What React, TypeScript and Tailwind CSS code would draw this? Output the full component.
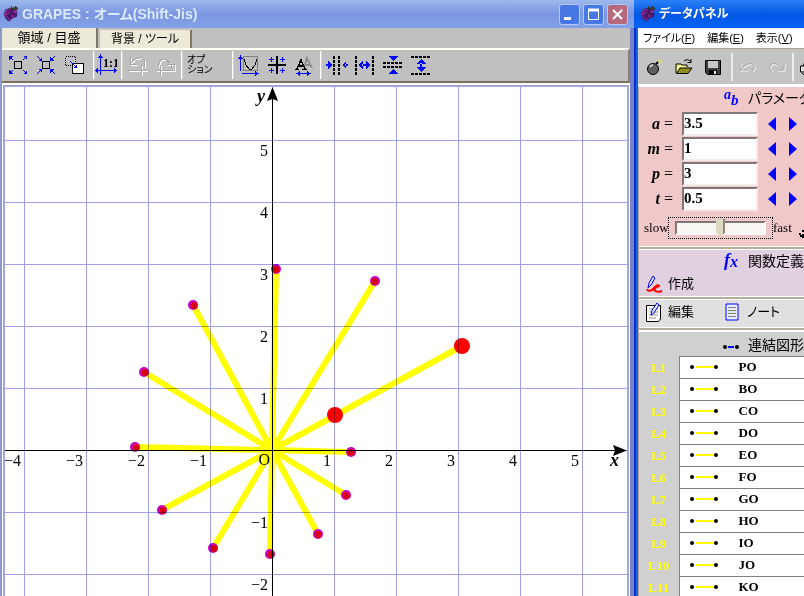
import React from "react";

const JP = "font-['Liberation_Sans','Noto_Sans_CJK_JP',sans-serif] [font-feature-settings:'palt']";
const SERIF = "font-['Liberation_Serif',serif]";

function Grape() {
  const dots = [
    [4, 6], [7, 5], [10, 6], [3, 9], [6, 8], [9, 9], [12, 7], [4, 12], [7, 11], [10, 11], [6, 14], [12, 10],
  ];
  return (
    <svg width="16" height="18" viewBox="0 0 16 18" className="shrink-0" aria-hidden="true">
      <path d="M3 13 8 4 13 8 9 14Z" fill="#301048" />
      {dots.map(([x, y], i) => (
        <circle key={i} cx={x} cy={y} r="2" fill={i % 3 === 0 ? "#a030a0" : i % 3 === 1 ? "#702890" : "#501870"} stroke="#30104c" strokeWidth="0.5" />
      ))}
      <path d="M8 4 9 1M9 4 13 1.5 15 4 11 4.5Z" stroke="#303020" fill="#504030" strokeWidth="1" />
    </svg>
  );
}

function Sep({ tight }: { tight?: boolean }) {
  return <span className={`h-7 w-[2px] shrink-0 border-l border-white bg-[#d4d4d0] ${tight ? "ml-2" : "mx-1"}`} />;
}

function Tool({ label, children }: { label: string; children: React.ReactNode }) {
  return (
    <button type="button" aria-label={label} className="flex h-[22px] w-[22px] shrink-0 items-center justify-center">
      <svg width="22" height="22" viewBox="0 0 22 22" fill="none" shapeRendering="crispEdges">
        {children}
      </svg>
    </button>
  );
}

const undoArrow = "M3 3V10H10M4 9Q8 3 15 4Q20 7 17 13";
const redoArrow = "M19 17V10H12M18 16Q15 6 8 5Q3 7 4 13";

function Engraved({ d }: { d: string }) {
  return (
    <>
      <path d={d} stroke="#fff" transform="translate(1 1)" />
      <path d={d} stroke="#a8a8a8" />
    </>
  );
}

function MainToolbar() {
  return (
    <div className="flex h-[35px] items-center overflow-hidden border-y-2 border-b-[#7b7060] border-t-[#fffff4] border-r-2 border-r-[#8a8070] bg-[#c0c0c0] pb-px pl-[5px]">
      <div className="flex gap-[6px]">
        <Tool label="拡大">
          <rect x="7.5" y="7.5" width="7" height="7" stroke="#000" />
          <path d="M6 6 3 3M16 6 19 3M6 16 3 19M16 16 19 19" stroke="#00f" />
          <path d="M2 2H6L2 6ZM20 2H16L20 6ZM2 20H6L2 16ZM20 20H16L20 16Z" fill="#00f" />
        </Tool>
        <Tool label="縮小">
          <rect x="7.5" y="7.5" width="7" height="7" stroke="#000" />
          <path d="M2 2 5 5M20 2 17 5M2 20 5 17M20 20 17 17" stroke="#00f" />
          <path d="M7 7H3L7 3ZM15 7H19L15 3ZM7 15H3L7 19ZM15 15H19L15 19Z" fill="#00f" />
        </Tool>
        <Tool label="範囲">
          <rect x="2.5" y="2.5" width="10" height="9" stroke="#000" strokeDasharray="1 1" />
          <rect x="9.5" y="9.5" width="11" height="10" fill="#fff" stroke="#000" />
          <path d="M7 7 13 13" stroke="#00f" />
          <path d="M14 14V10L10 14Z" fill="#00f" />
        </Tool>
      </div>
      <Sep tight />
      <Tool label="1対1">
        <path d="M5.5 1V21M1 16.5H21" stroke="#00f" />
        <path d="M3 4 5.5 0 8 4ZM19 14 22 16.5 19 19ZM3 14 0 16.5 3 19Z" fill="#00f" />
        <text x="8" y="13" fontSize="12" fontWeight="bold" fill="#000" className="font-['Liberation_Serif',serif]">1:1</text>
      </Tool>
      <Sep />
      <div className="flex gap-[6px]">
        <Tool label="元に戻す">
          <Engraved d={undoArrow} />
          <Engraved d="M1 16.5H20M14.5 11V21" />
        </Tool>
        <Tool label="やり直し">
          <Engraved d={redoArrow} />
          <Engraved d="M1 16.5H20M5.5 11V21" />
        </Tool>
      </div>
      <Sep />
      <button type="button" className={`${JP} mr-[17px] w-6 shrink-0 whitespace-nowrap text-left text-[10px] leading-[10px] text-black`}>
        オプ<br />ション
      </button>
      <Sep />
      <div className="flex gap-[6px]">
        <Tool label="グラフ領域">
          <rect x="5.5" y="2.5" width="14" height="14" stroke="#808080" />
          <path d="M6 5 8 11 11 15H14L17 11 19 5" stroke="#000" />
          <path d="M2.5 3V17M4 19.5H18" stroke="#00f" />
          <path d="M0 5 2.5 1 5 5ZM17 17 21 19.5 17 22Z" fill="#00f" />
        </Tool>
        <Tool label="目盛">
          <path d="M3 5.5H8M14 5.5H19M3 16.5H8M14 16.5H19M5.5 3V8M5.5 14V19M16.5 3V8M16.5 14V19" stroke="#00f" />
          <path d="M2 11H20M11 2V20" stroke="#000" strokeWidth="2" />
        </Tool>
        <Tool label="文字サイズ">
          <path d="M10 14 13 4 18 14M12 11H17" stroke="#909090" strokeWidth="2" />
          <path d="M3 15 7 6 11 15M4 12H10M1 15.5H5M8 15.5H13" stroke="#000" strokeWidth="1.5" />
          <path d="M4 19.5H15" stroke="#00f" />
          <path d="M2 19.5 6 17V22ZM17 19.5 13 17V22Z" fill="#00f" />
        </Tool>
      </div>
      <Sep />
      <div className="flex gap-[6px]">
        <Tool label="横に縮める">
          <path d="M8 2V21M13 2V21" stroke="#000" strokeWidth="2" strokeDasharray="3 1" />
          <path d="M2 7 6 11 2 15ZM20 7 16 11 20 15ZM0 10H3V12H0ZM19 10H22V12H19Z" fill="#00f" />
        </Tool>
        <Tool label="横に広げる">
          <path d="M2 2V21M19 2V21" stroke="#000" strokeWidth="2" strokeDasharray="3 1" />
          <path d="M9 7 4 11 9 15ZM12 7 17 11 12 15ZM8 10H13V12H8Z" fill="#00f" />
        </Tool>
        <Tool label="縦に縮める">
          <path d="M1 9H21M1 13H21" stroke="#000" strokeWidth="2" strokeDasharray="3 1" />
          <path d="M6 2H16L11 7ZM6 20H16L11 15Z" fill="#00f" />
        </Tool>
        <Tool label="縦に広げる">
          <path d="M1 3H21M1 20H21" stroke="#000" strokeWidth="2" strokeDasharray="3 1" />
          <path d="M6 10H16L11 5ZM6 13H16L11 18ZM10 9H12V14H10Z" fill="#00f" />
        </Tool>
      </div>
    </div>
  );
}

const OX = 272;
const OY = 450;
const UNIT = 62;
const POINTS = [
  [276, 269], [375, 281], [193, 305], [144, 372], [135, 447], [162, 510],
  [213, 548], [270, 554], [318, 534], [346, 495], [351, 452],
];

function Plot() {
  const steps = [-4, -3, -2, -1, 0, 1, 2, 3, 4, 5];
  return (
    <svg className={`block h-[509px] w-full ${SERIF}`} role="img" aria-label="グラフ">
      <rect width="100%" height="100%" fill="#fff" />
      <g transform="translate(-5 -87)">
        <g stroke="#a0a0f0" shapeRendering="crispEdges">
          {steps.map((s) => (
            <line key={`v${s}`} x1={OX + s * UNIT + 0.5} x2={OX + s * UNIT + 0.5} y1="80" y2="600" />
          ))}
          {steps.map((s) => (
            <line key={`h${s}`} x1="0" x2="640" y1={OY - s * UNIT + 0.5} y2={OY - s * UNIT + 0.5} />
          ))}
        </g>
        <g className="mix-blend-multiply">
          <g stroke="#ff0" strokeWidth="6">
            {[...POINTS, [462, 346]].map(([x, y], i) => (
              <line key={i} x1={OX} y1={OY} x2={x} y2={y} />
            ))}
          </g>
          {POINTS.map(([x, y], i) => (
            <g key={i}>
              <circle cx={x} cy={y} r="5" fill="#c800c8" />
              <circle cx={x + (x < OX ? 1 : 0)} cy={y + 0.5} r="3.5" fill="#d80010" />
            </g>
          ))}
          <circle cx="462" cy="346" r="8" fill="#f00" />
          <circle cx="335" cy="415" r="8" fill="#f00" />
        </g>
        <path d="M272.5 90V600M0 450.5H620" stroke="#000" shapeRendering="crispEdges" />
        <path d="M272.5 87 278 101 272.5 99 267 101ZM627 450.5 613 445 615 450.5 613 456Z" fill="#000" />
        <g fontSize="16" fill="#000" textAnchor="end">
          {steps.filter((s) => s !== 0).map((s) => (
            <text key={`x${s}`} x={OX + s * UNIT - 3} y="466">{s < 0 ? `−${-s}` : s}</text>
          ))}
          {steps.filter((s) => s !== 0 && s > -3).map((s) => (
            <text key={`y${s}`} x={OX - 4} y={OY - s * UNIT + 16}>{s < 0 ? `−${-s}` : s}</text>
          ))}
          <text x="270" y="465">O</text>
        </g>
        <g fontSize="18" fontWeight="bold" fontStyle="italic">
          <text x="257" y="102">y</text>
          <text x="610" y="466">x</text>
        </g>
      </g>
    </svg>
  );
}

function CaptionButton({ label, red, children }: { label: string; red?: boolean; children: React.ReactNode }) {
  return (
    <button
      type="button"
      aria-label={label}
      className={`h-[21px] w-[21px] rounded-[3px] border border-[#b8c8f4] ${red ? "bg-[#b56a7c]" : "bg-[#4878e4]"}`}
    >
      <svg width="19" height="19" viewBox="0 0 19 19" fill="none" stroke="#fff">{children}</svg>
    </button>
  );
}

function GraphWindow() {
  return (
    <section className="min-w-0 flex-1 overflow-hidden">
      <header className="flex h-7 items-center bg-linear-to-b from-[#9db9ee] via-[#7b96e0] to-[#82a2e8] pl-[3px] pr-[6px]">
        <Grape />
        <h1 className={`${JP} ml-[3px] flex-1 whitespace-nowrap text-[14px] font-bold leading-5 text-[#dce8fb]`}>GRAPES : オーム(Shift-Jis)</h1>
        <div className="flex gap-[3px]">
          <CaptionButton label="最小化">
            <path d="M4 13.5H11" strokeWidth="3" />
          </CaptionButton>
          <CaptionButton label="最大化">
            <path d="M4.5 4.5H14.5V14.5H4.5Z" />
            <path d="M4 5H15" strokeWidth="3" />
          </CaptionButton>
          <CaptionButton label="閉じる" red>
            <path d="M5 5 14 14M14 5 5 14" strokeWidth="2" />
          </CaptionButton>
        </div>
      </header>
      <div className="border-l-2 border-r-4 border-l-[#8f9acb] border-r-[#7681ca] bg-[#c0c0c0]">
        <div role="tablist" className={`${JP} flex h-5 items-end gap-[2px] text-black`}>
          <button type="button" role="tab" aria-selected="true" className="h-5 w-24 whitespace-nowrap border-r-2 border-r-[#807860] bg-[#ece9d8] text-[13px] leading-5">
            領域 / 目盛
          </button>
          <button type="button" role="tab" aria-selected="false" className="h-[18px] w-[92px] whitespace-nowrap border-r-2 border-r-[#807860] bg-[#ece9d8] text-[12px] leading-[18px]">
            背景 / ツール
          </button>
        </div>
        <MainToolbar />
        <div className="bg-white px-px pt-[2px]">
          <div className="border-x-2 border-t-2 border-[#a4a4e4]">
            <Plot />
          </div>
        </div>
      </div>
    </section>
  );
}

function PanelTool({ label, children }: { label: string; children: React.ReactNode }) {
  return (
    <button type="button" aria-label={label} className="h-5 w-5 shrink-0">
      <svg width="20" height="20" viewBox="0 0 20 20" fill="none">{children}</svg>
    </button>
  );
}

function PanelToolbar() {
  return (
    <div className="flex h-[38px] items-center border-b-2 border-t border-b-white border-t-[#a8a490] bg-[#c4c4c4] pl-[7px]">
      <div className="flex gap-[9px]">
        <PanelTool label="新規">
          <circle cx="8" cy="12" r="5.5" fill="#606060" stroke="#000" />
          <path d="M5 10Q6 8 8 8" stroke="#d0d0d0" strokeWidth="2" />
          <path d="M11 7 13 5" stroke="#000" strokeWidth="2" />
          <path d="M14 5 17 3M14 2V4M17 6 15 5" stroke="#e8e840" />
        </PanelTool>
        <PanelTool label="開く">
          <path d="M2 16V7H7L8 8H13V10" fill="#f4f490" stroke="#000" />
          <path d="M2.5 16.500 6 11H18L14 16.500Z" fill="#909020" stroke="#000" />
          <path d="M10 4Q14 1 17 5M17 2V5.500H13.500" stroke="#000" />
        </PanelTool>
        <PanelTool label="保存">
          <path d="M2.5 3.500H17.500V17.500H4.500L2.500 15.500Z" fill="#404040" stroke="#000" />
          <path d="M5 4H15V11H5Z" fill="#c8c8c8" />
          <path d="M6 13H14V18H6Z" fill="#000" />
          <path d="M11 14H13V17H11Z" fill="#fff" />
        </PanelTool>
      </div>
      <span className="ml-2 mr-[5px] h-7 w-[2px] shrink-0 bg-[#eeeee8]" />
      <div className="flex gap-2">
        <PanelTool label="元に戻す">
          <path d="M2 6V13H9M3 12Q9 5 15 7Q18 11 14 14" stroke="#fff" transform="translate(1 1)" />
          <path d="M2 6V13H9M3 12Q9 5 15 7Q18 11 14 14" stroke="#a8a8a8" />
        </PanelTool>
        <PanelTool label="やり直し">
          <path d="M18 6V13H11M17 12Q11 5 5 7Q2 11 6 14" stroke="#fff" transform="translate(1 1)" />
          <path d="M18 6V13H11M17 12Q11 5 5 7Q2 11 6 14" stroke="#a8a8a8" />
        </PanelTool>
      </div>
      <span className="ml-[6px] mr-[5px] h-7 w-[2px] shrink-0 bg-[#eeeee8]" />
      <PanelTool label="印刷">
        <path d="M1.500 9H18V15H1.500ZM4 9 7 3H16L14 9M3 16 5 18H16" fill="#e0e0e0" stroke="#000" />
      </PanelTool>
    </div>
  );
}

function Heading({ icon, text }: { icon: React.ReactNode; text: string }) {
  return (
    <h2 className={`${JP} flex h-[22px] items-center gap-2 whitespace-nowrap pl-[83px] text-[14px] leading-[22px] text-black`}>
      <svg width="18" height="20" viewBox="0 0 18 20" fill="none" className={`shrink-0 ${SERIF}`} aria-hidden="true">{icon}</svg>
      {text}
    </h2>
  );
}

function Param({ name, value }: { name: string; value: string }) {
  return (
    <div className="flex h-[25px] items-center">
      <label htmlFor={`param-${name}`} className={`${SERIF} w-[34px] shrink-0 whitespace-nowrap text-right text-[16px] leading-6 text-black`}>
        <b><i>{name}</i></b> =
      </label>
      <input
        id={`param-${name}`}
        defaultValue={value}
        className={`${SERIF} ml-[9px] mr-[9px] h-6 w-[76px] shrink-0 border-2 border-b-[#f4ecec] border-l-[#807878] border-r-[#f4ecec] border-t-[#807878] bg-white text-[15px] font-bold leading-5 text-black outline-none`}
      />
      <button type="button" aria-label={`${name} を減らす`} className="shrink-0">
        <svg width="10" height="16" viewBox="0 0 10 16"><path d="M9 1V15L1 8Z" fill="#00f" /></svg>
      </button>
      <button type="button" aria-label={`${name} を増やす`} className="ml-[11px] shrink-0">
        <svg width="10" height="16" viewBox="0 0 10 16"><path d="M1 1V15L9 8Z" fill="#00f" /></svg>
      </button>
    </div>
  );
}

function Menu({ name, hotkey }: { name: string; hotkey: string }) {
  return (
    <button type="button" className="whitespace-nowrap">
      {name}(<u>{hotkey}</u>)
    </button>
  );
}

const LINKS = ["PO", "BO", "CO", "DO", "EO", "FO", "GO", "HO", "IO", "JO", "KO"];

function DataPanel() {
  return (
    <section className="h-[596px] w-[170px] shrink-0 overflow-hidden">
      <header className="flex h-7 items-center gap-[3px] bg-linear-to-b from-[#2a80f8] via-[#0457e4] to-[#0562f4] pl-[6px]">
        <Grape />
        <h1 className={`${JP} whitespace-nowrap text-[12px] font-bold leading-5 text-white`}>データパネル</h1>
      </header>
      <div className="border-l-2 border-[#0a30d0]">
        <div className="border-l-2 border-[#1c60e4] bg-white">
          <nav className={`${JP} flex h-5 gap-3 pl-[5px] text-[11px] leading-4 text-black`}>
            <Menu name="ファイル" hotkey="F" />
            <Menu name="編集" hotkey="E" />
            <Menu name="表示" hotkey="V" />
          </nav>
          <PanelToolbar />

          <div className="flex flex-col gap-[2px] border-l border-[#b0a898] bg-[#b4ac9c]">
            <div className="h-[161px] border-y border-white bg-[#f0c8c8]">
              <Heading
                text="パラメータ"
                icon={
                  <g fill="#00f" fontStyle="italic" fontWeight="bold">
                    <text x="2" y="11" fontSize="14">a</text>
                    <text x="9" y="17" fontSize="15">b</text>
                  </g>
                }
              />
              <div className="mt-[2px]">
                <Param name="a" value="3.5" />
                <Param name="m" value="1" />
                <Param name="p" value="3" />
                <Param name="t" value="0.5" />
              </div>
              <div className={`${SERIF} mt-[6px] flex h-[22px] items-center text-[13px] leading-4 text-black`}>
                <label htmlFor="speed" className="w-[29px] shrink-0 pl-[5px]">slow</label>
                <div className="flex h-[22px] w-[105px] shrink-0 items-center border border-dotted border-black px-[6px]">
                  <input
                    id="speed"
                    type="range"
                    defaultValue="50"
                    className="h-5 w-full appearance-none bg-transparent [&::-webkit-slider-runnable-track]:h-[14px] [&::-webkit-slider-runnable-track]:border-2 [&::-webkit-slider-runnable-track]:border-b-white [&::-webkit-slider-runnable-track]:border-l-[#807878] [&::-webkit-slider-runnable-track]:border-r-white [&::-webkit-slider-runnable-track]:border-t-[#807878] [&::-webkit-slider-runnable-track]:bg-[#f8f6f2] [&::-webkit-slider-thumb]:mt-[-4px] [&::-webkit-slider-thumb]:h-[18px] [&::-webkit-slider-thumb]:w-[9px] [&::-webkit-slider-thumb]:appearance-none [&::-webkit-slider-thumb]:border-r-2 [&::-webkit-slider-thumb]:border-[#908878] [&::-webkit-slider-thumb]:bg-[#dcd8c4] [&::-webkit-slider-thumb]:[clip-path:polygon(0_0,100%_0,100%_75%,50%_100%,0_75%)]"
                  />
                </div>
                <span>fast</span>
                <svg width="12" height="12" viewBox="0 0 12 12" className="ml-[6px] mt-3 shrink-0" aria-hidden="true">
                  <path d="M1 6H3M4 3H7M2 8H5M5 6V10" stroke="#000" strokeWidth="2" />
                </svg>
              </div>
            </div>

            <div className="h-12 border-y border-white bg-[#e0d0e0]">
              <Heading
                text="関数定義"
                icon={
                  <g fill="#00f" fontStyle="italic" fontWeight="bold">
                    <text x="2" y="15" fontSize="18">f</text>
                    <text x="8" y="16" fontSize="16">x</text>
                  </g>
                }
              />
              <button type="button" className={`${JP} flex h-6 items-center gap-1 pl-[7px] text-[13px] leading-6 text-black`}>
                <svg width="18" height="18" viewBox="0 0 18 18" fill="none">
                  <path d="M2 13 3 8 7 1 9 3 5 10 2 13" fill="#d8e4ff" stroke="#00f" />
                  <path d="M1 14Q2 17 6 15Q12 8 13 11Q9 12 8 15Q11 18 16 16" stroke="#f00" strokeWidth="2" />
                </svg>
                作成
              </button>
            </div>

            <div className={`${JP} flex h-[29px] items-center border-y border-white bg-[#e0e0e0] pb-1 pl-[7px] text-[13px] leading-6 text-black`}>
              <button type="button" className="flex items-center gap-1">
                <svg width="18" height="20" viewBox="0 0 18 20" fill="none">
                  <path d="M.5 3.500H14.500V17L12.500 19.500H.5Z" fill="#fff" stroke="#000" />
                  <path d="M3 7H12M3 10H12M3 13H12M3 16H10" stroke="#909090" />
                  <path d="M5 13 6 8 11 1 13 3 8 11Z" fill="#d8e4ff" stroke="#00f" />
                </svg>
                編集
              </button>
              <button type="button" className="ml-[31px] flex items-center gap-2">
                <svg width="14" height="18" viewBox="0 0 14 18" fill="none">
                  <path d="M1 1H13V17H1Z" fill="#e8ecff" stroke="#00f" />
                  <path d="M3 4.500H11M3 7.500H11M3 10.500H11M3 13.500H11" stroke="#808080" />
                </svg>
                ノート
              </button>
            </div>

            <div className="border-t-2 border-white bg-[#d0d0d0]">
              <div className="pt-[2px]">
                <Heading
                  text="連結図形"
                  icon={
                    <>
                      <path d="M6 12H12" stroke="#00f" strokeWidth="2" />
                      <circle cx="3" cy="12" r="2" fill="#000" />
                      <circle cx="15" cy="12" r="2" fill="#000" />
                    </>
                  }
                />
              </div>
              <table className={`${SERIF} w-full table-fixed border-collapse text-[13px] font-bold leading-5`}>
                <tbody>
                  {LINKS.map((name, i) => (
                    <tr key={name} className="h-[22px]">
                      <th scope="row" className="w-10 p-0 text-center align-middle text-[#ff0]">{`L${i + 1}`}</th>
                      <td className="border-y border-l border-[#808080] bg-white p-0 align-top text-black">
                        <div className="flex h-5 items-center gap-5 pl-[10px]">
                          <svg width="29" height="6" viewBox="0 0 29 6" className="shrink-0" aria-hidden="true">
                            <path d="M5 3H24" stroke="#ff0" strokeWidth="2" />
                            <circle cx="2" cy="3" r="2" fill="#000" />
                            <circle cx="26" cy="3" r="2" fill="#000" />
                          </svg>
                          {name}
                        </div>
                      </td>
                    </tr>
                  ))}
                </tbody>
              </table>
            </div>
          </div>
        </div>
      </div>
    </section>
  );
}

export default function App() {
  return (
    <main className="flex min-h-screen items-start overflow-hidden bg-white">
      <GraphWindow />
      <DataPanel />
    </main>
  );
}
